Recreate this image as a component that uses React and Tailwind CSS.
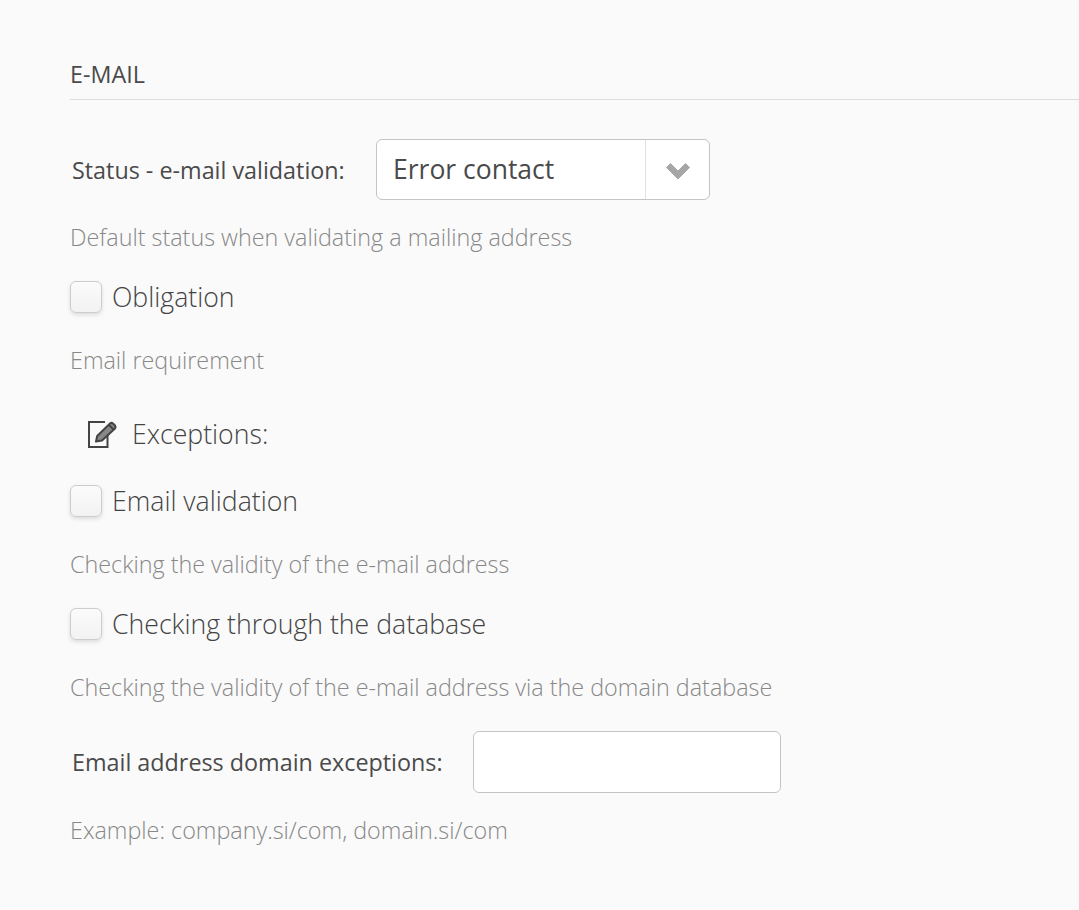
import React from "react";

function Check({ label }) {
  return (
    <div className="flex items-center h-[32px]">
      <span className="block w-[32px] h-[32px] rounded-[6px] border border-[#cccccc] bg-gradient-to-b from-[#fbfbfb] to-[#f2f2f2] shadow-[0_2px_4px_rgba(0,0,0,0.12)]" />
      <span className="ml-[10px] text-[26.67px] leading-[32px] font-light text-[#444444]">{label}</span>
    </div>
  );
}

function Help({ children, className = "" }) {
  return <p className={"text-[23.33px] leading-[32px] font-light text-[#888888] " + className}>{children}</p>;
}

export default function App() {
  return (
    <div className="min-h-[910px] bg-[#fafafa] pl-[70px] pt-[59px] font-['Open_Sans',sans-serif] overflow-hidden">
      <div className="border-b border-[#dddddd] h-[41px]">
        <h2 className="text-[23.33px] leading-[30px] text-[#4a4a4a] font-normal">E-MAIL</h2>
      </div>

      <div className="flex items-center mt-[39px] pl-[2px]">
        <label className="w-[304px] text-[23.33px] leading-[30px] text-[#4a4a4a]">Status - e-mail validation:</label>
        <div className="flex w-[334px] h-[61px] rounded-[6px] border border-[#c4c4c4] bg-white">
          <span className="flex-1 pl-[16px] text-[26.5px] leading-[58px] text-[#4a4a4a]">Error contact</span>
          <span className="flex w-[64px] items-center justify-center border-l border-[#e0e0e0]">
            <svg width="26" height="18" viewBox="0 0 26 18" className="mt-[3px]">
              <path d="M1.5 5.5 L5.5 1.5 L13 9 L20.5 1.5 L24.5 5.5 L13 17 Z" fill="#a6a6a6" stroke="#a6a6a6" strokeWidth="1" strokeLinejoin="round" />
            </svg>
          </span>
        </div>
      </div>

      <Help className="mt-[21px]">Default status when validating a mailing address</Help>

      <div className="mt-[28px]"><Check label="Obligation" /></div>
      <Help className="mt-[31px]">Email requirement</Help>

      <div className="flex items-center mt-[42px] pl-[17px] h-[32px]">
        <svg width="30" height="29" viewBox="0 0 30 29" className="shrink-0">
          <path d="M18 2 H2 V27 H20.5 V15" fill="none" stroke="#444444" strokeWidth="2" />
          <path d="M9 21.5 L10.2 16 L23 3.5 Q24.5 2.2 26 3.5 L28 5.5 Q29 7 28 8.5 L15 20.5 Z" fill="#888888" stroke="#444444" strokeWidth="2" strokeLinejoin="round" />
          <path d="M21.5 4.5 L27 10" fill="none" stroke="#444444" strokeWidth="2" />
        </svg>
        <span className="ml-[15px] text-[26.67px] leading-[32px] font-light text-[#444444]">Exceptions:</span>
      </div>

      <div className="mt-[35px]"><Check label="Email validation" /></div>
      <Help className="mt-[31px]">Checking the validity of the e-mail address</Help>

      <div className="mt-[28px]"><Check label="Checking through the database" /></div>
      <Help className="mt-[31px]">Checking the validity of the e-mail address via the domain database</Help>

      <div className="flex items-center mt-[28px] pl-[2px]">
        <label className="w-[401px] text-[23.33px] leading-[30px] text-[#4a4a4a]">Email address domain exceptions:</label>
        <input className="w-[308px] h-[62px] rounded-[6px] border border-[#c4c4c4] bg-white" />
      </div>

      <Help className="mt-[21px]">Example: company.si/com, domain.si/com</Help>
    </div>
  );
}
